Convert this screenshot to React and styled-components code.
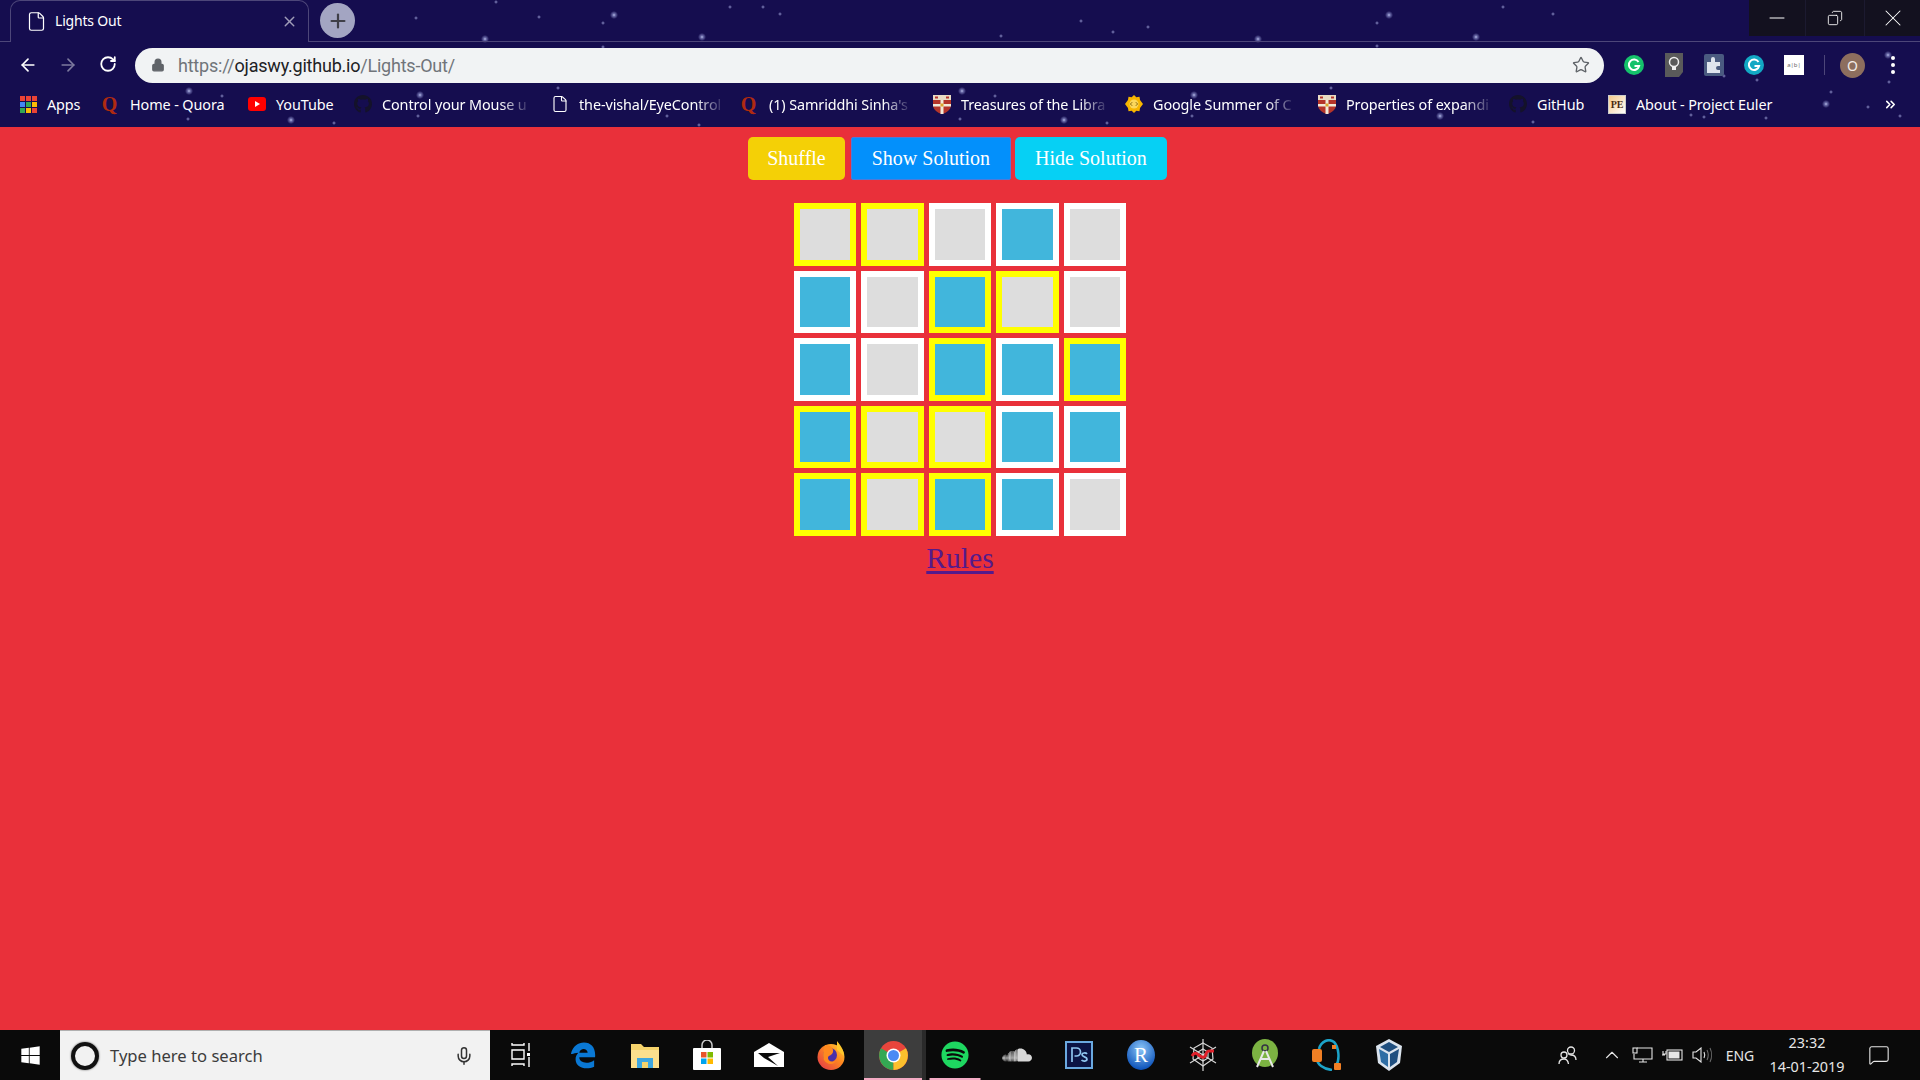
import styled, { createGlobalStyle } from "styled-components";
import { ArrowLeft, ArrowRight, RotateCw, Star, File, Plus, X, Minus, Copy, Mic, ChevronUp, MessageSquare, Lock, ChevronsRight } from "lucide-react";
import { FaGithub, FaWindows, FaSpotify, FaSoundcloud } from "react-icons/fa";

const GlobalStyle = createGlobalStyle`
  html, body {
    margin: 0;
    padding: 0;
    height: 100%;
    overflow: hidden;
  }
  #root {
    height: 100%;
  }
`;

const bright = [[614, 15], [485, 39], [702, 37], [1258, 39], [1389, 15], [1476, 37], [1826, 104], [1064, 120], [291, 120], [189, 91], [420, 95], [962, 91], [1194, 95], [1440, 116], [1888, 55]];
const faint = [[603, 23], [603, 47], [222, 96], [334, 123], [558, 88], [418, 116], [188, 119], [539, 17], [496, 2], [416, 18], [730, 7], [763, 7], [780, 14], [1081, 21], [1113, 32], [1148, 27], [1001, 36], [995, 96], [667, 116], [699, 125], [960, 119], [1107, 123], [1192, 116], [1377, 23], [1503, 7], [1553, 14], [1377, 46], [1724, 76], [1757, 80], [1889, 82], [1831, 92], [1868, 107], [1900, 116], [1691, 115], [1766, 118], [1331, 88], [1533, 122], [1704, 117]];

const starfield = [
  ...bright.map(([x, y]) => `radial-gradient(circle 4px at ${x}px ${y}px, #b9c0e8 0, #6a6aa8 35%, transparent 100%)`),
  ...faint.map(([x, y]) => `radial-gradient(circle 2px at ${x}px ${y}px, #8a8cc4 0, transparent 100%)`),
].join(",");

const Page = styled.div`
  height: 100%;
  display: flex;
  flex-direction: column;
  background: #e9303a;
`;

const Browser = styled.div`
  height: 127px;
  flex: none;
  display: flex;
  flex-direction: column;
  background-color: #150d4f;
  background-image: ${starfield};
  font-family: "Noto Sans", Roboto, sans-serif;
  color: #fff;
`;

const TabStrip = styled.div`
  height: 41px;
  flex: none;
  display: flex;
  align-items: flex-start;
  padding-left: 10px;
  border-bottom: 1px solid #4d4679;
`;

const Tab = styled.div`
  width: 299px;
  height: 42px;
  box-sizing: border-box;
  display: flex;
  align-items: center;
  padding: 0 10px 0 15px;
  border: 1px solid #4d4679;
  border-bottom: none;
  border-radius: 10px 10px 0 0;
  background: #150d4f;
`;

const TabTitle = styled.span`
  flex: 1;
  margin-left: 8px;
  margin-top: -3px;
  font-size: 14px;
  letter-spacing: -0.2px;
  color: #fff;
`;

const NewTab = styled.div`
  width: 35px;
  height: 35px;
  margin: 3px 0 0 11px;
  border-radius: 50%;
  background: #a3a5c2;
  color: #3f3f48;
  display: flex;
  align-items: center;
  justify-content: center;
`;

const WindowControls = styled.div`
  margin-left: auto;
  height: 36px;
  display: flex;
  background: #13111f;
`;

const WindowButton = styled.div`
  width: ${({ $w }) => $w}px;
  box-sizing: border-box;
  display: flex;
  align-items: center;
  justify-content: center;
  color: #fff;
  border-left: ${({ $first }) => ($first ? "none" : "1px solid #1c1a30")};
`;

const Toolbar = styled.div`
  height: 46px;
  flex: none;
  display: flex;
  align-items: center;
`;

const NavButton = styled.div`
  width: 40px;
  display: flex;
  justify-content: center;
  color: ${({ $dim }) => ($dim ? "#7d7a9e" : "#fff")};
`;

const NavGroup = styled.div`
  display: flex;
  width: 135px;
  padding-left: 8px;
  box-sizing: border-box;
`;

const AddressBar = styled.div`
  width: 1469px;
  height: 35px;
  border-radius: 18px;
  background: #f1f3f4;
  display: flex;
  align-items: center;
  padding: 0 14px 0 16px;
  box-sizing: border-box;
  color: #5f6368;
`;

const Url = styled.div`
  flex: 1;
  margin-left: 13px;
  font-family: Roboto, sans-serif;
  font-size: 18px;
  letter-spacing: -0.22px;
  color: #70757a;
  span {
    color: #202124;
  }
`;

const Extensions = styled.div`
  display: flex;
  align-items: center;
  flex: 1;
  padding-left: 20px;
`;

const Extension = styled.div`
  width: 20px;
  height: 20px;
  margin-right: 20px;
  display: flex;
  align-items: center;
  justify-content: center;
  flex: none;
`;

const Divider = styled.div`
  width: 1px;
  height: 20px;
  background: #4d4679;
  margin-right: 15px;
`;

const Avatar = styled.div`
  width: 25px;
  height: 25px;
  border-radius: 50%;
  background: #8d6e5e;
  color: #f3ece8;
  font-size: 14px;
  display: flex;
  align-items: center;
  justify-content: center;
  margin-right: 26px;
`;

const Dots = styled.div`
  display: grid;
  gap: 3px;
  i {
    display: block;
    width: 4px;
    height: 4px;
    border-radius: 50%;
    background: #fff;
  }
`;

const Bookmarks = styled.div`
  height: 34px;
  box-sizing: border-box;
  padding: 0 0 2px 19px;
  display: flex;
  align-items: center;
`;

const Bookmark = styled.div`
  width: ${({ $w }) => $w}px;
  flex: none;
  display: flex;
  align-items: center;
  gap: 10px;
  font-size: 14.4px;
  letter-spacing: -0.1px;
`;

const BookmarkIcon = styled.div`
  width: 18px;
  height: 18px;
  flex: none;
  display: flex;
  align-items: center;
  justify-content: center;
`;

const BookmarkLabel = styled.span`
  white-space: nowrap;
  ${({ $fade }) =>
    $fade &&
    "mask-image: linear-gradient(to right, #000 82%, rgba(0,0,0,0.15) 100%);"}
`;

const QuoraGlyph = styled.span`
  margin-right: 3px;
  font: bold 20px "Liberation Serif", serif;
  color: #b02a10;
`;

const More = styled.div`
  margin-left: auto;
  margin-right: 22px;
  display: flex;
`;

const AppsGrid = styled.div`
  display: grid;
  grid-template-columns: repeat(3, 5px);
  grid-auto-rows: 5px;
  gap: 1px;
  i {
    display: block;
  }
`;

const PeLogo = styled.div`
  width: 19px;
  height: 19px;
  box-sizing: border-box;
  border: 1px solid #ccc;
  background: linear-gradient(135deg, #f5c98a, #fff);
  color: #4a2a10;
  font: bold 10px "Liberation Serif", serif;
  display: flex;
  align-items: center;
  justify-content: center;
`;

const Main = styled.main`
  flex: 1;
  display: flex;
  flex-direction: column;
  align-items: center;
  padding-top: 10px;
  font-family: "Liberation Serif", serif;
`;

const ButtonRow = styled.div`
  display: flex;
  gap: 5px;
  padding-right: 5px;
`;

const GameButton = styled.button`
  height: 43px;
  box-sizing: border-box;
  padding: 0 ${({ $pad }) => $pad}px;
  margin-right: ${({ $nudge }) => $nudge || 0}px;
  border: ${({ $focus }) => ($focus ? "1px solid #4f79d8" : "none")};
  border-radius: ${({ $focus }) => ($focus ? "2px" : "5px")};
  background: ${({ $bg }) => $bg};
  color: #fff;
  font: 20px "Liberation Serif", serif;
`;

const Board = styled.div`
  margin-top: 23px;
  display: grid;
  grid-template-columns: repeat(5, 62.5px);
  grid-auto-rows: 62.5px;
  gap: 5px;
`;

const Cell = styled.div`
  box-sizing: border-box;
  border: 6px solid ${({ $mark }) => ($mark ? "#ffff00" : "#ffffff")};
  background: ${({ $on }) => ($on ? "#41b6dc" : "#dddddd")};
`;

const RulesLink = styled.a`
  margin-top: 5px;
  font-size: 29.6px;
  line-height: 34px;
  color: #551a8b;
  text-decoration: underline;
  text-decoration-thickness: 3px;
  text-underline-offset: 3px;
`;

const Taskbar = styled.div`
  height: 50px;
  flex: none;
  display: flex;
  background: #0a0a0a;
  color: #fff;
  font-family: "Noto Sans", Roboto, sans-serif;
`;

const StartButton = styled.div`
  width: 60px;
  display: flex;
  align-items: center;
  justify-content: center;
`;

const SearchBox = styled.div`
  width: 430px;
  box-sizing: border-box;
  display: flex;
  align-items: center;
  padding: 0 16px 0 11px;
  background: #f2f2f2;
  border-top: 1px solid #b0b0b0;
  color: #3a3a3a;
`;

const Cortana = styled.div`
  width: 28px;
  height: 28px;
  box-sizing: border-box;
  border-radius: 50%;
  border: 4px solid #111;
  box-shadow: 0 0 2px #555;
  flex: none;
`;

const SearchText = styled.span`
  flex: 1;
  margin-left: 11px;
  font-size: 16.6px;
  color: #3c3c3c;
`;

const TaskIcons = styled.div`
  display: flex;
`;

const TaskItem = styled.div`
  width: 58px;
  height: 50px;
  margin: 0 2px;
  position: relative;
  display: flex;
  align-items: center;
  justify-content: center;
  background: ${({ $active }) => ($active ? "#3d3d3d" : "transparent")};
  box-shadow: ${({ $active }) => ($active ? "4px 0 0 #2a2a2a" : "none")};
  &::after {
    content: "";
    position: absolute;
    bottom: 0;
    left: 50%;
    transform: translateX(-50%);
    width: ${({ $open }) => $open || 0}px;
    height: 2px;
    background: #f4abc4;
  }
`;

const Tray = styled.div`
  margin-left: auto;
  display: flex;
  align-items: center;
  color: #e6e6e6;
`;

const TraySlot = styled.div`
  width: ${({ $w }) => $w}px;
  margin-left: ${({ $gap }) => $gap || 0}px;
  display: flex;
  align-items: center;
  justify-content: center;
  font-size: 14px;
`;

const Clock = styled.div`
  width: 88px;
  text-align: center;
  font-size: 14.4px;
  line-height: 24px;
`;

function Doc() {
  return <File size={20} strokeWidth={1.5} color="#fff" />;
}

function Crest() {
  return (
    <svg width="18" height="20" viewBox="0 0 18 20">
      <path d="M0 1h18v10c0 5-5 8-9 9-4-1-9-4-9-9z" fill="#b5352a" />
      <rect y="1" width="18" height="5" fill="#e8dcc4" />
      <path d="M7.500 6h3v14h-3zM0 10h18v2.500H0z" fill="#f2ead8" />
      <rect x="7.500" y="9.500" width="3" height="3" fill="#d9a52c" />
      <rect x="2" y="2.500" width="3" height="2" fill="#b5352a" />
      <rect x="13" y="2.500" width="3" height="2" fill="#b5352a" />
    </svg>
  );
}

function Gsoc() {
  return (
    <svg width="20" height="20" viewBox="0 0 20 20">
      <path d="M10 0l2.600 2.600 3.500-.6.6 3.500L20 10l-3.300 4.500-.6 3.500-3.500-.6L10 20l-2.600-2.600-3.500.6-.6-3.500L0 10l3.300-4.500.6-3.500 3.500.6z" fill="#f7b500" />
      <circle cx="10" cy="10" r="5" fill="#fbd75b" />
      <path d="M8 8l-2 2 2 2M12 8l2 2-2 2" stroke="#7a5a00" fill="none" />
    </svg>
  );
}

const appsColors = ["#ea4335", "#ea4335", "#ea4335", "#4285f4", "#34a853", "#fbbc05", "#34a853", "#fbbc05", "#ea4335"];

function AppsIcon() {
  return (
    <AppsGrid>
      {appsColors.map((c, i) => (
        <i key={i} style={{ background: c }} />
      ))}
    </AppsGrid>
  );
}

function YouTubeIcon() {
  return (
    <svg width="18" height="14" viewBox="0 0 18 14">
      <rect width="18" height="14" rx="3" fill="#f00" />
      <path d="M7 4l5 3-5 3z" fill="#fff" />
    </svg>
  );
}

const bookmarks = [
  { w: 83, icon: <AppsIcon />, label: "Apps" },
  { w: 146, icon: <QuoraGlyph>Q</QuoraGlyph>, label: "Home - Quora" },
  { w: 106, icon: <YouTubeIcon />, label: "YouTube" },
  { w: 197, icon: <FaGithub size={20} color="#14122a" />, label: "Control your Mouse u", fade: true },
  { w: 190, icon: <Doc />, label: "the-vishal/EyeControl", fade: true },
  { w: 192, icon: <QuoraGlyph>Q</QuoraGlyph>, label: "(1) Samriddhi Sinha's", fade: true },
  { w: 192, icon: <Crest />, label: "Treasures of the Libra", fade: true },
  { w: 193, icon: <Gsoc />, label: "Google Summer of C", fade: true },
  { w: 191, icon: <Crest />, label: "Properties of expandi", fade: true },
  { w: 99, icon: <FaGithub size={20} color="#14122a" />, label: "GitHub" },
  { w: 170, icon: <PeLogo>PE</PeLogo>, label: "About - Project Euler" },
];

const board = [
  [[1, 0], [1, 0], [0, 0], [0, 1], [0, 0]],
  [[0, 1], [0, 0], [1, 1], [1, 0], [0, 0]],
  [[0, 1], [0, 0], [1, 1], [0, 1], [1, 1]],
  [[1, 1], [1, 0], [1, 0], [0, 1], [0, 1]],
  [[1, 1], [1, 0], [1, 1], [0, 1], [0, 0]],
];

function GrammarlyBadge({ color }) {
  return (
    <svg width="20" height="20" viewBox="0 0 20 20">
      <circle cx="10" cy="10" r="10" fill={color} />
      <path d="M14.500 7a5.200 5.200 0 1 0 .6 4H10.500" stroke="#fff" strokeWidth="2" fill="none" />
    </svg>
  );
}

function BulbBadge() {
  return (
    <svg width="20" height="24" viewBox="0 0 20 24">
      <path d="M1 0h18v19l-4 5H1z" fill="#5a5a5a" />
      <circle cx="10" cy="9" r="4.500" stroke="#eee" strokeWidth="1.500" fill="none" />
      <path d="M8 14h4v3H8z" fill="#eee" />
    </svg>
  );
}

function PuzzleBadge() {
  return (
    <svg width="20" height="22" viewBox="0 0 20 22">
      <rect width="20" height="22" rx="2" fill="#4a5a80" />
      <path d="M3 8h4V5a2 2 0 1 1 4 0v3h5v4h-2a2 2 0 1 0 0 4h2v3H3z" fill="#dfe4ee" />
    </svg>
  );
}

const AdblockBadge = styled.div`
  width: 20px;
  height: 20px;
  background: #fff;
  color: #666;
  font-size: 6px;
  display: flex;
  align-items: center;
  justify-content: center;
`;

function TaskView() {
  return (
    <svg width="20" height="24" viewBox="0 0 20 24" fill="none" stroke="#fff" strokeWidth="1.400">
      <path d="M1 0v2h12V0M1 7h12v9H1zM1 23v-2h12v2M18 0v8M18 14v10" />
      <rect x="16" y="10" width="3" height="3" fill="#fff" stroke="none" />
    </svg>
  );
}

function EdgeIcon() {
  return (
    <svg width="26" height="27" viewBox="0 0 28 28">
      <path d="M1 12C3 4 9 0 15 0c8 0 13 6 12 16H10c0 6 9 8 16 3v7c-9 4-20 1-20-8 0-3 1-5 3-7-4 0-6 2-8 1zm9-1h9c0-5-8-6-9 0z" fill="#0a78d4" />
    </svg>
  );
}

function ExplorerIcon() {
  return (
    <svg width="28" height="26" viewBox="0 0 28 26">
      <path d="M0 2h10l3 3h15v21H0z" fill="#f6d36b" />
      <rect x="0" y="8" width="28" height="18" fill="#fce08e" />
      <rect x="6" y="16" width="16" height="10" fill="#3fa7e0" />
      <rect x="11" y="20" width="6" height="6" fill="#f6d36b" />
    </svg>
  );
}

function StoreIcon() {
  return (
    <svg width="28" height="30" viewBox="0 0 28 30">
      <path d="M9 8V5a5 5 0 0 1 10 0v3" stroke="#ccc" strokeWidth="1.500" fill="none" />
      <rect y="8" width="28" height="22" rx="1" fill="#fff" />
      <rect x="8" y="12" width="5.500" height="5.500" fill="#e8542b" />
      <rect x="14.500" y="12" width="5.500" height="5.500" fill="#7fba00" />
      <rect x="8" y="18.500" width="5.500" height="5.500" fill="#00a4ef" />
      <rect x="14.500" y="18.500" width="5.500" height="5.500" fill="#ffb900" />
    </svg>
  );
}

function MailIcon() {
  return (
    <svg width="30" height="24" viewBox="0 0 30 24">
      <path d="M15 0l15 9v15H0V9z" fill="#fff" />
      <path d="M4 10h22L14 14l10 9-14-8z" fill="#0a0a0a" />
    </svg>
  );
}

function FirefoxIcon() {
  return (
    <svg width="28" height="30" viewBox="0 0 28 30">
      <defs>
        <linearGradient id="ff" x1="0" y1="1" x2="1" y2="0">
          <stop offset="0" stopColor="#e0314c" />
          <stop offset="0.6" stopColor="#ff8a1f" />
          <stop offset="1" stopColor="#ffd73a" />
        </linearGradient>
      </defs>
      <ellipse cx="14" cy="17" rx="13.500" ry="13" fill="url(#ff)" />
      <path d="M20 1c3 4 7 8 7 15L20 10z" fill="#ffc72c" />
      <circle cx="13" cy="15" r="7" fill="#4a2fa8" />
      <path d="M8 5c5 0 9 3 8 7s-5 3-5 6 5 5 8 3c-3 5-10 3-12-1C5 15 7 9 8 5z" fill="#ff8a1f" />
    </svg>
  );
}

function ChromeIcon() {
  return (
    <svg width="29" height="29" viewBox="0 0 29 29">
      <circle cx="14.500" cy="14.500" r="14.500" fill="#e8453c" />
      <path d="M14.500 14.500L2 7.300A14.500 14.500 0 0 0 14.500 29z" fill="#34a853" />
      <path d="M14.500 14.500L14.500 29A14.500 14.500 0 0 0 27 7.300z" fill="#fbc02d" />
      <circle cx="14.500" cy="14.500" r="7" fill="#fff" />
      <circle cx="14.500" cy="14.500" r="5.500" fill="#4a8af4" />
    </svg>
  );
}

function PsIcon() {
  return (
    <svg width="28" height="28" viewBox="0 0 28 28">
      <rect width="28" height="28" fill="#6aa9e0" />
      <rect x="2" y="2" width="24" height="24" fill="#0b1444" />
      <path d="M7 21V7h4.500a4 4 0 0 1 0 8H9.500M22 13c-1-1.500-5-1.500-5 .8 0 2.400 5 1.700 5 4.200 0 2.500-4 2.600-5.500 1" stroke="#8fc5ef" strokeWidth="1.700" fill="none" />
    </svg>
  );
}

function RIcon() {
  return (
    <svg width="28" height="30" viewBox="0 0 28 30">
      <defs>
        <radialGradient id="rball" cx="0.5" cy="0.3" r="0.7">
          <stop offset="0" stopColor="#8cc6f7" />
          <stop offset="1" stopColor="#0a50b8" />
        </radialGradient>
      </defs>
      <ellipse cx="14" cy="15" rx="14" ry="15" fill="url(#rball)" />
      <text x="14" y="22" textAnchor="middle" fontSize="21" fontFamily="Liberation Serif, serif" fill="#fff">R</text>
    </svg>
  );
}

function WebIcon() {
  return (
    <svg width="30" height="32" viewBox="0 0 30 32" fill="none" stroke="#d8d8d8" strokeWidth="1.200">
      <path d="M15 0v32M2 8l26 16M28 8L2 24" />
      <path d="M15 4l9 5 1 11-10 7-10-7 1-11z" />
      <path d="M15 10l5 3v6l-5 3-5-3v-6z" />
      <path d="M4 17c3-5 5-2 8 0s5 2 6-2 4-3 8-3" stroke="#e0202a" strokeWidth="3" />
    </svg>
  );
}

function AndroidStudioIcon() {
  return (
    <svg width="26" height="32" viewBox="0 0 26 32">
      <ellipse cx="13" cy="14" rx="13" ry="14" fill="#7cb342" />
      <circle cx="13" cy="9" r="3" fill="none" stroke="#334" strokeWidth="1.500" />
      <path d="M12 12L5 28M14 12l7 16M8 20h10" stroke="#e8e8e8" strokeWidth="2" fill="none" />
    </svg>
  );
}

function OrangeRingIcon() {
  return (
    <svg width="30" height="32" viewBox="0 0 30 32">
      <path d="M7 10C9 2 17-1 22 3c5 5 6 18 2 24" fill="none" stroke="#1ca3c8" strokeWidth="2.500" />
      <path d="M5 20c0 5 6 10 15 11" fill="none" stroke="#1ca3c8" strokeWidth="2.500" />
      <rect x="0" y="10" width="10" height="13" rx="2" fill="#f07f24" />
      <rect x="22" y="24" width="7" height="7" rx="1" fill="#f07f24" />
      <rect x="20" y="6" width="4" height="4" fill="#f07f24" />
    </svg>
  );
}

function VboxIcon() {
  return (
    <svg width="26" height="32" viewBox="0 0 26 32">
      <path d="M13 0l13 7-2 17-11 8-11-8L0 7z" fill="#dbe4ee" />
      <path d="M13 3l9 5-9 5-9-5z" fill="#1f4f80" />
      <path d="M3 10l9 5v13l-7-5z" fill="#2f6ea5" />
      <path d="M23 10l-9 5v13l7-5z" fill="#1f4f80" />
    </svg>
  );
}

const taskApps = [
  { icon: <TaskView /> },
  { icon: <EdgeIcon /> },
  { icon: <ExplorerIcon /> },
  { icon: <StoreIcon /> },
  { icon: <MailIcon /> },
  { icon: <FirefoxIcon /> },
  { icon: <ChromeIcon />, active: true, open: 58 },
  { icon: <FaSpotify size={28} color="#1ed760" />, open: 51 },
  { icon: <FaSoundcloud size={30} color="#d8d8d8" /> },
  { icon: <PsIcon /> },
  { icon: <RIcon /> },
  { icon: <WebIcon /> },
  { icon: <AndroidStudioIcon /> },
  { icon: <OrangeRingIcon /> },
  { icon: <VboxIcon /> },
];

function PeopleIcon() {
  return (
    <svg width="19" height="19" viewBox="0 0 19 19" fill="none" stroke="#e6e6e6" strokeWidth="1.300">
      <circle cx="13" cy="4.500" r="3.500" />
      <circle cx="6" cy="9" r="3" />
      <path d="M1 18c0-3 2-5 5-5s4 2 4.500 5M10 7.500c1 1.500 2 1.500 3 1.500 3 0 5 2 5 5" />
    </svg>
  );
}

function MonitorIcon() {
  return (
    <svg width="21" height="16" viewBox="0 0 21 16" fill="none" stroke="#e6e6e6" strokeWidth="1.100">
      <path d="M5 1h15v11H2V7M11 12v3M7 15h8" />
      <rect x="1" y="1" width="4" height="5" />
    </svg>
  );
}

function BatteryIcon() {
  return (
    <svg width="21" height="14" viewBox="0 0 21 14" fill="none" stroke="#e6e6e6" strokeWidth="1.100">
      <rect x="5" y="2" width="15" height="10" />
      <rect x="6.500" y="3.500" width="11" height="7" fill="#e6e6e6" stroke="none" />
      <path d="M0 7h3M1 3v3h3V3" />
    </svg>
  );
}

function SpeakerIcon() {
  return (
    <svg width="21" height="16" viewBox="0 0 21 16" fill="none" stroke="#e6e6e6" strokeWidth="1.100">
      <path d="M1 5h3l5-4v14l-5-4H1z" />
      <path d="M12 5c1 2 1 4 0 6" />
      <path d="M15 3c1.500 3 1.500 7 0 10M18 1c2 4 2 10 0 14" stroke="#6a6a6a" />
    </svg>
  );
}

function App() {
  return (
    <>
      <GlobalStyle />
      <Page>
        <Browser>
          <TabStrip>
            <Tab>
              <File size={21} strokeWidth={1.4} color="#fff" />
              <TabTitle>Lights Out</TabTitle>
              <X size={17} color="#a09db8" strokeWidth={2} />
            </Tab>
            <NewTab>
              <Plus size={22} strokeWidth={2.4} />
            </NewTab>
            <WindowControls>
              <WindowButton $w={56} $first>
                <Minus size={24} strokeWidth={1} />
              </WindowButton>
              <WindowButton $w={59}>
                <Copy size={16} strokeWidth={1.3} style={{ transform: "scaleX(-1)" }} />
              </WindowButton>
              <WindowButton $w={56}>
                <X size={28} strokeWidth={0.9} />
              </WindowButton>
            </WindowControls>
          </TabStrip>
          <Toolbar>
            <NavGroup>
              <NavButton>
                <ArrowLeft size={20} />
              </NavButton>
              <NavButton $dim>
                <ArrowRight size={20} />
              </NavButton>
              <NavButton>
                <RotateCw size={18} strokeWidth={2.4} />
              </NavButton>
            </NavGroup>
            <AddressBar>
              <Lock size={14} fill="#5f6368" strokeWidth={2} />
              <Url>
                https://<span>ojaswy.github.io</span>/Lights-Out/
              </Url>
              <Star size={18} strokeWidth={1.8} />
            </AddressBar>
            <Extensions>
              <Extension>
                <GrammarlyBadge color="#15c26b" />
              </Extension>
              <Extension>
                <BulbBadge />
              </Extension>
              <Extension>
                <PuzzleBadge />
              </Extension>
              <Extension>
                <GrammarlyBadge color="#12a8c4" />
              </Extension>
              <Extension>
                <AdblockBadge>a|b|</AdblockBadge>
              </Extension>
              <Divider />
              <Avatar>O</Avatar>
              <Dots>
                <i />
                <i />
                <i />
              </Dots>
            </Extensions>
          </Toolbar>
          <Bookmarks>
            {bookmarks.map((b) => (
              <Bookmark key={b.label} $w={b.w}>
                <BookmarkIcon>{b.icon}</BookmarkIcon>
                <BookmarkLabel $fade={b.fade}>{b.label}</BookmarkLabel>
              </Bookmark>
            ))}
            <More>
              <ChevronsRight size={15} strokeWidth={2.5} />
            </More>
          </Bookmarks>
        </Browser>
        <Main>
          <ButtonRow>
            <GameButton $bg="#f4d006" $pad={19} $nudge={1}>
              Shuffle
            </GameButton>
            <GameButton $bg="#0390fb" $pad={20} $focus $nudge={-1}>
              Show Solution
            </GameButton>
            <GameButton $bg="#06d0f4" $pad={20}>
              Hide Solution
            </GameButton>
          </ButtonRow>
          <Board>
            {board.flat().map(([mark, on], i) => (
              <Cell key={i} $mark={mark} $on={on} />
            ))}
          </Board>
          <RulesLink href="#rules">Rules</RulesLink>
        </Main>
        <Taskbar>
          <StartButton>
            <FaWindows size={21} />
          </StartButton>
          <SearchBox>
            <Cortana />
            <SearchText>Type here to search</SearchText>
            <Mic size={20} strokeWidth={1.8} color="#333" />
          </SearchBox>
          <TaskIcons>
            {taskApps.map((app, i) => (
              <TaskItem key={i} $active={app.active} $open={app.open}>
                {app.icon}
              </TaskItem>
            ))}
          </TaskIcons>
          <Tray>
            <TraySlot $w={30}>
              <PeopleIcon />
            </TraySlot>
            <TraySlot $w={30} $gap={15}>
              <ChevronUp size={22} strokeWidth={1.2} />
            </TraySlot>
            <TraySlot $w={30}>
              <MonitorIcon />
            </TraySlot>
            <TraySlot $w={30}>
              <BatteryIcon />
            </TraySlot>
            <TraySlot $w={30}>
              <SpeakerIcon />
            </TraySlot>
            <TraySlot $w={46}>ENG</TraySlot>
            <Clock>
              23:32
              <br />
              14-01-2019
            </Clock>
            <TraySlot $w={56}>
              <MessageSquare size={22} strokeWidth={1.2} />
            </TraySlot>
            <TraySlot $w={13} />
          </Tray>
        </Taskbar>
      </Page>
    </>
  );
}

export default App;
